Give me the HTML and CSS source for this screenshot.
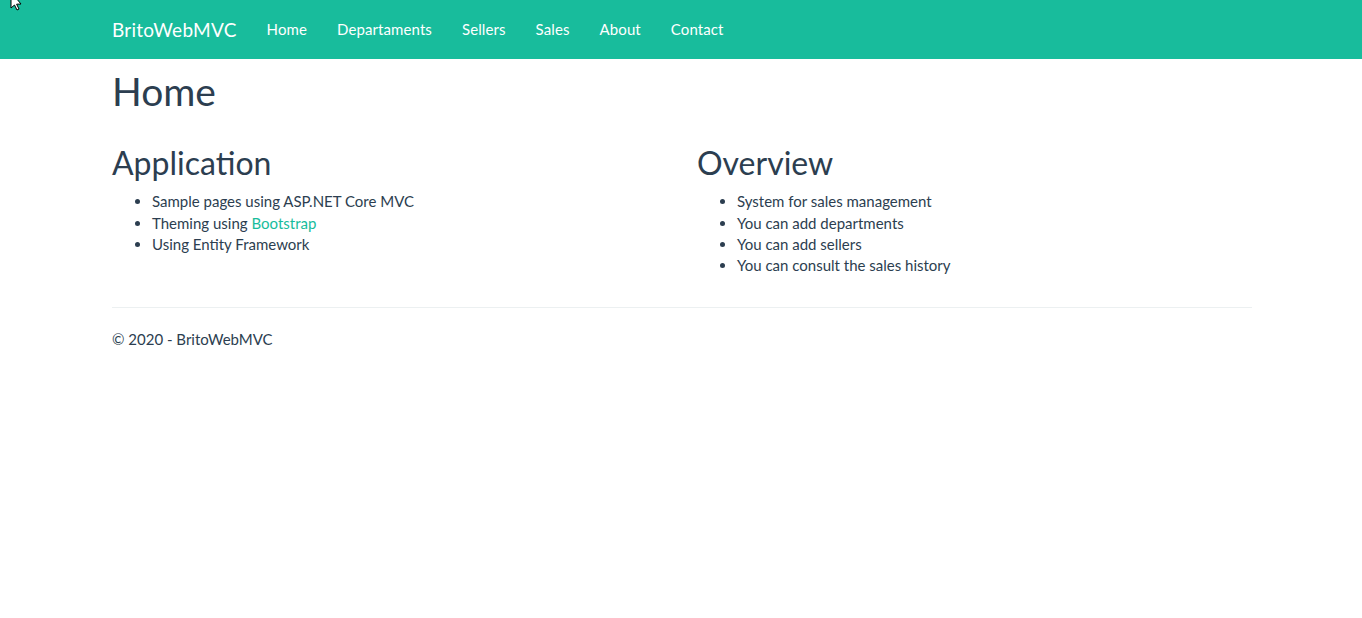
FILE: index.html
```html
<!DOCTYPE html>
<html lang="en">
<head>
<meta charset="utf-8">
<title>Home - BritoWebMVC</title>
<link rel="stylesheet" href="styles.css">
</head>
<body>
<svg class="cursor" width="12" height="12" viewBox="0 0 12 12" aria-hidden="true"><path d="M1 -8 L1 8 L4.5 5 L7 10 L9 9 L6.6 4.2 L11 4 Z" fill="#fff" stroke="#000" stroke-width="1"/></svg>
<nav class="navbar">
  <div class="container nav-inner">
    <a class="brand" href="#">BritoWebMVC</a>
    <ul class="nav-links">
      <li><a href="#">Home</a></li>
      <li><a href="#">Departaments</a></li>
      <li><a href="#">Sellers</a></li>
      <li><a href="#">Sales</a></li>
      <li><a href="#">About</a></li>
      <li><a href="#">Contact</a></li>
    </ul>
  </div>
</nav>
<main class="container body-content">
  <h1 class="page-title">Home</h1>
  <div class="row">
    <div class="col">
      <h2>Application</h2>
      <ul>
        <li>Sample pages using ASP.NET Core MVC</li>
        <li>Theming using <a href="#">Bootstrap</a></li>
        <li>Using Entity Framework</li>
      </ul>
    </div>
    <div class="col">
      <h2>Overview</h2>
      <ul>
        <li>System for sales management</li>
        <li>You can add departments</li>
        <li>You can add sellers</li>
        <li>You can consult the sales history</li>
      </ul>
    </div>
  </div>
  <hr>
  <footer>
    <p>&copy; 2020 - BritoWebMVC</p>
  </footer>
</main>
</body>
</html>
```
FILE: styles.css
```css
* { box-sizing: border-box; }
html, body { margin: 0; padding: 0; }
body {
  font-family: Lato, "Open Sans", "Liberation Sans", sans-serif;
  font-size: 15px;
  line-height: 1.428571429;
  color: #2c3e50;
  background: #fff;
}
.cursor {
  position: absolute;
  left: 10px;
  top: 0;
  overflow: visible;
}
a { color: #18bc9c; text-decoration: none; }
.container {
  width: 1170px;
  margin: 0 auto;
  padding: 0 14px 0 16px;
}
.navbar {
  background: #18bc9c;
  height: 59px;
}
.nav-inner {
  display: flex;
  align-items: stretch;
  height: 59px;
}
.brand {
  color: #fff;
  font-size: 19px;
  line-height: 21px;
  letter-spacing: 0.25px;
  padding: 19px 15px;
  margin-left: -15px;
}
.nav-links {
  display: flex;
  list-style: none;
  margin: 0;
  padding: 0;
}
.nav-links a {
  display: block;
  color: #fff;
  font-size: 15px;
  line-height: 21px;
  letter-spacing: 0.1px;
  padding: 19px 15px;
}
h1, h2 {
  font-family: inherit;
  font-weight: 400;
  line-height: 1.1;
  color: #2c3e50;
}
.page-title {
  font-size: 39px;
  margin: 11px 0 11.5px;
}
h2 {
  font-size: 32px;
  margin: 21px 0 10.5px;
}
.row {
  display: flex;
  margin: 0 -15px;
}
.col {
  width: 50%;
  padding: 0 15px;
}
ul {
  margin: 0 0 9.5px;
  padding-left: 40px;
}
hr {
  margin: 21px 0;
  border: 0;
  border-top: 1px solid #ecf0f1;
}
footer p {
  margin: 0 0 10.5px;
}
```
